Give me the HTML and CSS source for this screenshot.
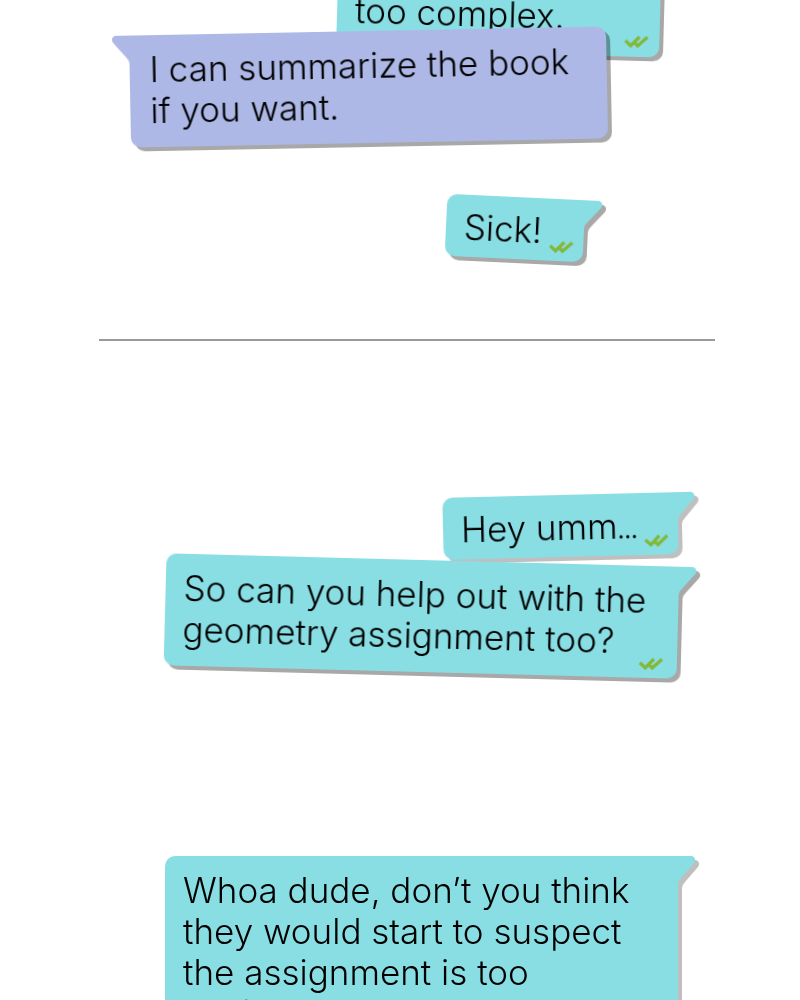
FILE: index.html
```html
<!DOCTYPE html>
<html lang="en">
<head>
<meta charset="utf-8">
<meta name="viewport" content="width=device-width, initial-scale=1">
<title>Chat</title>
<link rel="stylesheet" href="styles.css">
</head>
<body>
<svg class="defs" aria-hidden="true">
  <symbol id="tail" viewBox="0 0 24 28"><path d="M0 0H16Q21 2 18 7L5 22Q2 25 2 28H0Z" fill="currentColor"/></symbol>
  <symbol id="checks" viewBox="0 0 26 14"><path d="M2 6L7.500 11L16 2M11.500 8L14.500 11L24 2" fill="none" stroke="currentColor" stroke-width="3.300"/></symbol>
</svg>
<main class="thread">
  <article class="bubble sent first">
    <p>too complex.</p>
    <svg class="checks"><use href="#checks"/></svg>
  </article>
  <article class="bubble received offer">
    <svg class="tail"><use href="#tail"/></svg>
    <p>I can summarize the book if you want.</p>
  </article>
  <article class="bubble sent short sick">
    <svg class="tail"><use href="#tail"/></svg>
    <p>Sick!</p>
    <svg class="checks"><use href="#checks"/></svg>
  </article>
  <hr class="divider">
  <article class="bubble sent short pale hey">
    <svg class="tail"><use href="#tail"/></svg>
    <p>Hey umm<span class="ellipsis">…</span></p>
    <svg class="checks"><use href="#checks"/></svg>
  </article>
  <article class="bubble sent wide request">
    <svg class="tail"><use href="#tail"/></svg>
    <p>So can you help out with the geometry assignment too?</p>
    <svg class="checks"><use href="#checks"/></svg>
  </article>
  <article class="bubble sent wide pale doubt">
    <svg class="tail"><use href="#tail"/></svg>
    <p>Whoa dude, don’t you think they would start to suspect the assignment is too perfect?</p>
    <svg class="checks"><use href="#checks"/></svg>
  </article>
</main>
</body>
</html>
```
FILE: styles.css
```css
* {
  box-sizing: border-box;
}

body {
  margin: 0;
  background: #fff;
  color: #000;
  font-family: Inter, "Liberation Sans", sans-serif;
  font-size: 35px;
  font-weight: 300;
  line-height: 41px;
}

.defs {
  position: absolute;
  width: 0;
  height: 0;
}

.thread {
  display: flex;
  flex-direction: column;
  height: 100vh;
  overflow: hidden;
  padding: 0 85px 0 99px;
}

.bubble {
  position: relative;
  flex-shrink: 0;
  max-width: 100%;
  padding: 14px 16px 16px 18px;
  border-radius: 10px;
  filter: drop-shadow(4px 4px 0 rgba(0, 0, 0, 0.34));
}

.bubble p {
  margin: 0;
}

.sent {
  align-self: flex-end;
  margin-right: 37px;
  border-top-right-radius: 0;
  background: #89dee4;
}

.received {
  align-self: flex-start;
  border-top-left-radius: 0;
  background: #adb8e6;
}

.pale {
  filter: drop-shadow(4px 4px 0 rgba(0, 0, 0, 0.25));
}

.short {
  padding: 12px 16px 9px 18px;
  white-space: nowrap;
}

.wide {
  width: 513px;
}

.ellipsis {
  font-size: 22px;
  font-weight: 500;
  line-height: 1;
}

.tail {
  position: absolute;
  top: 0;
  width: 24px;
  height: 28px;
}

.sent .tail {
  left: calc(100% - 2px);
  color: #89dee4;
}

.received .tail {
  right: calc(100% - 2px);
  color: #adb8e6;
  transform: scaleX(-1);
}

.checks {
  position: absolute;
  right: 13px;
  bottom: 7px;
  width: 26px;
  height: 14px;
  color: #83b83a;
}

.first {
  width: 323px;
  margin-top: -20px;
  margin-right: 55px;
  padding-bottom: 18px;
  transform: rotate(1.6deg);
}

.first .checks {
  right: 10px;
  bottom: 8px;
}

.offer {
  width: 477px;
  margin: -22px 0 0 31px;
  padding-left: 20px;
  transform: rotate(-1.1deg);
}

.sick {
  width: 138px;
  margin-top: 54px;
  margin-right: 131px;
  transform: rotate(2.7deg);
}

.sick .checks {
  right: 9px;
}

.divider {
  width: 100%;
  height: 2px;
  margin: 80px 0 154px;
  border: 0;
  background: #999;
  flex-shrink: 0;
}

.hey {
  width: 235px;
  transform: rotate(-1.4deg);
}

.hey .checks {
  right: 9px;
}

.request {
  margin-top: 3px;
  transform: rotate(1.5deg);
}

.doubt {
  margin-top: 184px;
}
```
